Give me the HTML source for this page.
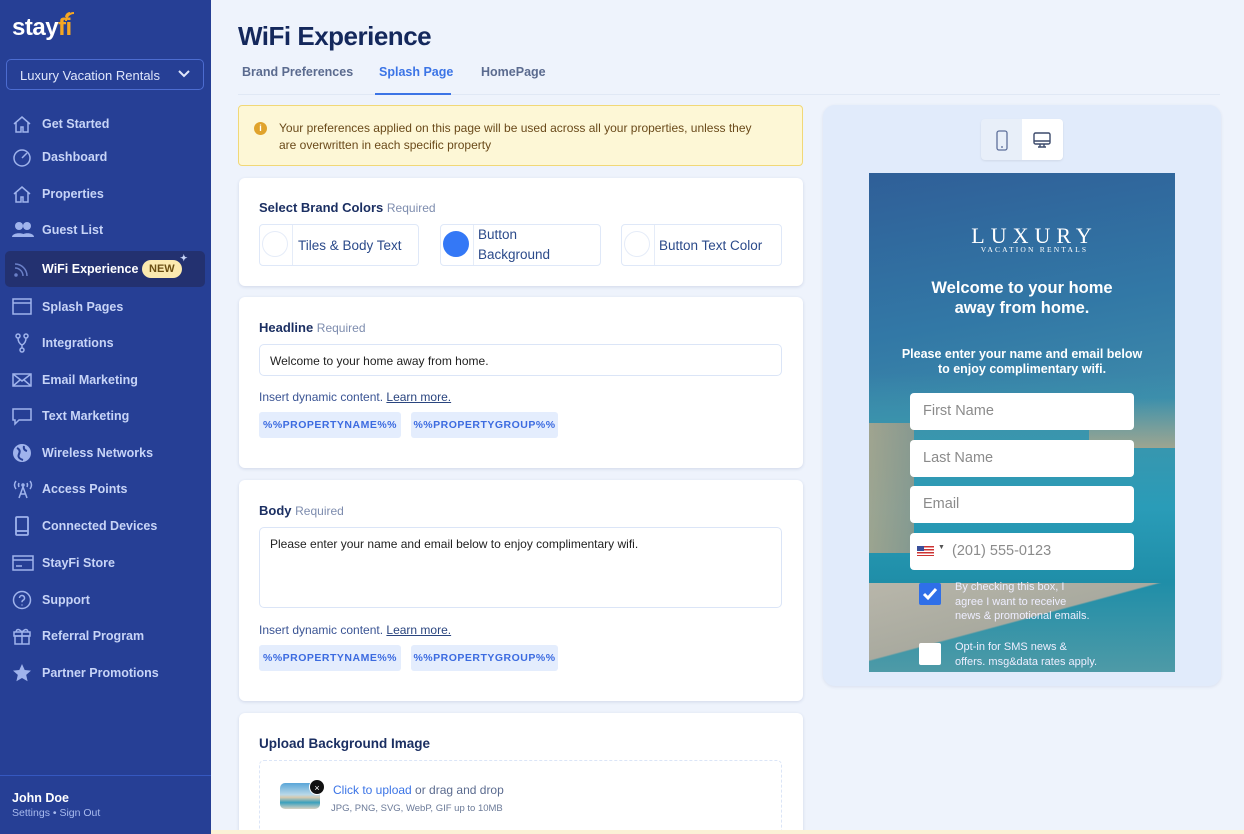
<!DOCTYPE html>
<html><head><meta charset="utf-8"><style>
*{box-sizing:border-box;margin:0;padding:0}
html{width:1244px;height:834px;overflow:hidden}
body{width:1244px;height:834px;overflow:hidden;background:#eef3fc;font-family:"Liberation Sans",sans-serif;position:relative}
.sb{position:absolute;left:0;top:0;width:211px;height:834px;background:#263f95}
.logo{position:absolute;left:12px;top:14px;color:#fff;font-weight:bold;font-size:24px;letter-spacing:-0.5px}
.logo span{color:#f5a623}
.sel{position:absolute;left:6px;top:59px;width:198px;height:31px;border:1px solid #4c6cd0;border-radius:5px;color:#dfe6fb;font-size:13px;padding:8px 0 0 13px}
.sel svg{position:absolute;right:13px;top:10px}
.nav{position:absolute;left:0;width:211px;height:36px;color:#c7d4f7;font-size:12.5px;font-weight:bold}
.nav svg{position:absolute;left:12px;top:8px}
.nav b{position:absolute;left:42px;top:11px;font-weight:bold}
.act{left:5px;width:200px;background:#233170;border-radius:5px;color:#fff}
.act svg{left:7px}.act b{left:37px}
.new{position:absolute;left:137px;top:9px;background:#fbeab0;color:#6b4f12;font-size:11px;font-weight:bold;border-radius:10px;padding:3px 7px}
.user{position:absolute;left:0;top:775px;width:211px;border-top:1px solid #3558c0;height:60px}
h1{position:absolute;left:238px;top:21px;font-size:26px;color:#14285c;font-weight:bold;letter-spacing:-0.5px}
.tab{position:absolute;top:65px;font-size:12.5px;color:#5b6b8f;font-weight:bold}
.card{position:absolute;left:239px;width:564px;background:#fff;border-radius:6px;box-shadow:0 1px 3px rgba(40,60,120,.15);overflow:hidden}
.lbl{position:absolute;left:20px;font-size:13px;font-weight:bold;color:#1b2f62}
.lbl i{font-style:normal;font-weight:normal;color:#7d8cae;font-size:12px}
.inp{position:absolute;left:20px;width:523px;border:1px solid #dbe5f7;border-radius:5px;font-size:12px;color:#222;padding:9px 10px}
.ins{position:absolute;left:20px;font-size:12px;color:#3a5494}
.ins u{color:#2a457f}
.chip{position:absolute;height:26px;background:#e4edfd;border-radius:3px;color:#3c6be0;font-size:10.5px;font-weight:bold;padding:7px 0;letter-spacing:.5px;text-align:center}
.sw{position:absolute;top:46px;height:42px;border:1px solid #dfe8f8;border-radius:4px;font-size:13.5px;color:#2b4a8a}
.sw .c{position:absolute;left:2px;top:6px;width:26px;height:26px;border-radius:50%;border:1px solid #e5ecf8}
.sw .d{position:absolute;left:32px;top:0;width:1px;height:40px;background:#e5ecf8}
.pv{position:absolute;left:823px;top:105px;width:398px;height:581px;background:#e1ebfb;border-radius:12px;box-shadow:0 1px 3px rgba(40,60,120,.1)}
.ph{position:absolute;left:869px;top:173px;width:306px;height:499px;background:linear-gradient(170deg,#2f5f98 0%,#3278a6 30%,#3d8aaa 50%,#4a94a8 60%);overflow:hidden}
.fi{position:absolute;left:41px;width:224px;height:37px;background:#fff;border-radius:4px;color:#8b8b8b;font-size:14.5px;padding:10px 13px}
.wt{position:absolute;color:#fff;text-align:center;width:306px;font-weight:bold}
.cb{position:absolute;left:86px;color:#eef;font-size:11px;line-height:14.5px}
</style></head><body>
<div class="sb">
<div class="logo">stay<span>fi</span><svg width="12" height="12" style="position:absolute;left:52px;top:-3px" viewBox="0 0 12 12"><path d="M2 10a8 8 0 0 1 8-8M2 6a4 4 0 0 1 4-4" stroke="#f5a623" stroke-width="2" fill="none"/></svg></div>
<div class="sel">Luxury Vacation Rentals<svg width="12" height="8" viewBox="0 0 12 8"><path d="M1 1l5 5 5-5" stroke="#dfe6fb" stroke-width="2" fill="none"/></svg></div>
<div class="nav" style="top:106px"><svg width="20" height="20" viewBox="0 0 20 20" fill="none" stroke="#9fb3ec" stroke-width="1.5"><path d="M2 10l8-7 8 7M4 8v10h5v-5h2v5h5V8"/></svg><b>Get Started</b></div>
<div class="nav" style="top:139px"><svg width="20" height="20" viewBox="0 0 20 20" fill="none" stroke="#9fb3ec" stroke-width="1.5"><circle cx="10" cy="11" r="8"/><path d="M10 11l5-5"/></svg><b>Dashboard</b></div>
<div class="nav" style="top:176px"><svg width="20" height="20" viewBox="0 0 20 20" fill="none" stroke="#9fb3ec" stroke-width="1.5"><path d="M2 10l8-7 8 7M4 8v10h5v-5h2v5h5V8"/></svg><b>Properties</b></div>
<div class="nav" style="top:212px"><svg width="22" height="20" viewBox="0 0 22 20" fill="#9fb3ec"><circle cx="7" cy="6" r="4"/><circle cx="15" cy="6" r="4"/><path d="M0 17c0-5 14-5 14 0zM9 17c0-5 13-5 13 0z"/></svg><b>Guest List</b></div>
<div class="nav act" style="top:251px"><svg width="20" height="20" viewBox="0 0 20 20" fill="none" stroke="#6b80c8" stroke-width="1.5"><path d="M3 9a8 8 0 0 1 8 8M3 5a12 12 0 0 1 12 12"/><circle cx="4" cy="16" r="1" fill="#6b80c8"/></svg><b>WiFi Experience</b><span class="new">NEW</span><span style="position:absolute;left:175px;top:2px;color:#c7d4f7;font-size:9px">✦</span></div>
<div class="nav" style="top:289px"><svg width="20" height="20" viewBox="0 0 20 20" fill="none" stroke="#9fb3ec" stroke-width="1.5"><rect x="1" y="2" width="18" height="15"/><path d="M1 6h18"/></svg><b>Splash Pages</b></div>
<div class="nav" style="top:325px"><svg width="20" height="20" viewBox="0 0 20 20" fill="none" stroke="#9fb3ec" stroke-width="1.5"><circle cx="6" cy="3" r="2"/><circle cx="14" cy="3" r="2"/><circle cx="10" cy="17" r="2"/><path d="M6 5q0 5 4 7 4-2 4-7M10 12v3"/></svg><b>Integrations</b></div>
<div class="nav" style="top:362px"><svg width="20" height="20" viewBox="0 0 20 20" fill="none" stroke="#9fb3ec" stroke-width="1.5"><rect x="1" y="4" width="18" height="12"/><path d="M1 4l9 7 9-7M1 16l7-6M19 16l-7-6"/></svg><b>Email Marketing</b></div>
<div class="nav" style="top:398px"><svg width="20" height="20" viewBox="0 0 20 20" fill="none" stroke="#9fb3ec" stroke-width="1.5"><path d="M1 3h18v11H7l-4 4v-4H1z"/></svg><b>Text Marketing</b></div>
<div class="nav" style="top:435px"><svg width="20" height="20" viewBox="0 0 20 20" fill="#9fb3ec"><circle cx="10" cy="10" r="9"/><path d="M5 5q4 2 2 6t4 6M12 3q-1 4 3 5" stroke="#263f95" stroke-width="2" fill="none"/></svg><b>Wireless Networks</b></div>
<div class="nav" style="top:471px"><svg width="22" height="20" viewBox="0 0 22 20" fill="none" stroke="#9fb3ec" stroke-width="1.5"><path d="M4 2q-3 4 0 8M18 2q3 4 0 8M7 4q-1 2 0 4M15 4q1 2 0 4M7 19l4-11 4 11M8 15h6"/><circle cx="11" cy="6" r="1"/></svg><b>Access Points</b></div>
<div class="nav" style="top:508px"><svg width="20" height="20" viewBox="0 0 20 20" fill="none" stroke="#9fb3ec" stroke-width="1.8"><rect x="4" y="1" width="12" height="18" rx="1"/><path d="M4 15h12"/></svg><b>Connected Devices</b></div>
<div class="nav" style="top:545px"><svg width="22" height="20" viewBox="0 0 22 20" fill="none" stroke="#9fb3ec" stroke-width="1.5"><rect x="1" y="3" width="20" height="14"/><path d="M1 7h20M4 13h6"/></svg><b>StayFi Store</b></div>
<div class="nav" style="top:582px"><svg width="20" height="20" viewBox="0 0 20 20" fill="none" stroke="#9fb3ec" stroke-width="1.5"><circle cx="10" cy="10" r="8.5"/><path d="M7.5 8a2.5 2.5 0 1 1 3.5 2.3c-1 .5-1 1-1 2M10 14.5v1"/></svg><b>Support</b></div>
<div class="nav" style="top:618px"><svg width="20" height="20" viewBox="0 0 20 20" fill="none" stroke="#9fb3ec" stroke-width="1.5"><rect x="2" y="6" width="16" height="4"/><rect x="3" y="10" width="14" height="8"/><path d="M10 6v12M10 6q-5-5-6 0M10 6q5-5 6 0"/></svg><b>Referral Program</b></div>
<div class="nav" style="top:655px"><svg width="20" height="20" viewBox="0 0 20 20" fill="#9fb3ec"><path d="M10 1l2.7 6 6.3.6-4.8 4.3 1.4 6.4L10 15l-5.6 3.3 1.4-6.4L1 7.6 7.3 7z"/></svg><b>Partner Promotions</b></div>
<div class="user"><div style="position:absolute;left:12px;top:15px;color:#fff;font-size:12.5px;font-weight:bold">John Doe</div><div style="position:absolute;left:12px;top:31px;color:#a9bbee;font-size:10.5px">Settings • Sign Out</div></div>
</div>

<h1>WiFi Experience</h1>
<div class="tab" style="left:242px">Brand Preferences</div>
<div class="tab" style="left:379px;color:#3b74e6">Splash Page</div>
<div class="tab" style="left:481px">HomePage</div>
<div style="position:absolute;left:238px;top:94px;width:982px;height:1px;background:#e0e8f5"></div>
<div style="position:absolute;left:375px;top:93px;width:76px;height:2px;background:#3b74e6"></div>

<div style="position:absolute;left:238px;top:105px;width:565px;height:61px;background:#fdf7d6;border:1px solid #f1d877;border-radius:4px;color:#6a4a1a;font-size:12px;line-height:17px;padding:14px 10px 0 40px">
<span style="position:absolute;left:15px;top:16px;width:13px;height:13px;border-radius:50%;background:#e0a32c;color:#fff;font-size:9px;text-align:center;line-height:13px;font-weight:bold">i</span>
Your preferences applied on this page will be used across all your properties, unless they<br>are overwritten in each specific property</div>

<div class="card" style="top:178px;height:108px">
<div class="lbl" style="top:22px">Select Brand Colors <i>Required</i></div>
<div class="sw" style="left:20px;width:160px"><div class="c"></div><div class="d"></div><span style="position:absolute;left:38px;top:13px">Tiles &amp; Body Text</span></div>
<div class="sw" style="left:201px;width:161px"><div class="c" style="background:#3478f6;border-color:#3478f6"></div><div class="d"></div><span style="position:absolute;left:37px;top:0;line-height:20px">Button<br>Background</span></div>
<div class="sw" style="left:382px;width:161px"><div class="c"></div><div class="d"></div><span style="position:absolute;left:37px;top:13px">Button Text Color</span></div>
</div>

<div class="card" style="top:297px;height:171px">
<div class="lbl" style="top:23px">Headline <i>Required</i></div>
<div class="inp" style="top:47px;height:32px">Welcome to your home away from home.</div>
<div class="ins" style="top:93px">Insert dynamic content. <u>Learn more.</u></div>
<div class="chip" style="left:20px;top:115px;width:142px">%%PROPERTYNAME%%</div>
<div class="chip" style="left:172px;top:115px;width:147px">%%PROPERTYGROUP%%</div>
</div>

<div class="card" style="top:480px;height:221px">
<div class="lbl" style="top:23px">Body <i>Required</i></div>
<div class="inp" style="top:47px;height:81px">Please enter your name and email below to enjoy complimentary wifi.</div>
<div class="ins" style="top:143px">Insert dynamic content. <u>Learn more.</u></div>
<div class="chip" style="left:20px;top:165px;width:142px">%%PROPERTYNAME%%</div>
<div class="chip" style="left:172px;top:165px;width:147px">%%PROPERTYGROUP%%</div>
</div>

<div class="card" style="top:713px;height:130px">
<div class="lbl" style="top:23px;font-size:13.5px">Upload Background Image</div>
<div style="position:absolute;left:20px;top:47px;width:523px;height:90px;border:1.5px dashed #dbe5f7;border-radius:5px"></div>
<div style="position:absolute;left:41px;top:70px;width:40px;height:26px;border-radius:5px;background:linear-gradient(180deg,#5aa6d8 0%,#b9d8e8 45%,#d8cbb0 55%,#3aa0bd 75%,#d9d2c2 100%)"></div>
<div style="position:absolute;left:70px;top:66px;width:16px;height:16px;border-radius:50%;background:#111;color:#fff;font-size:9px;text-align:center;line-height:16px;border:1px solid #fff">×</div>
<div style="position:absolute;left:94px;top:70px;font-size:12px;color:#5b6b8f"><span style="color:#3b74e6">Click to upload</span> or drag and drop</div>
<div style="position:absolute;left:92px;top:90px;font-size:9.5px;color:#6b7a98">JPG, PNG, SVG, WebP, GIF up to 10MB</div>
</div>
<div style="position:absolute;left:211px;top:830px;width:1033px;height:4px;background:#fbf1d6"></div>

<div class="pv">
<div style="position:absolute;left:158px;top:14px;width:82px;height:41px;background:#e8eff9;border-radius:4px;box-shadow:0 1px 2px rgba(0,0,0,.08)"></div>
<div style="position:absolute;left:199px;top:14px;width:41px;height:41px;background:#fff;border-radius:0 4px 4px 0"></div>
<svg style="position:absolute;left:172px;top:25px" width="14" height="21" viewBox="0 0 14 21" fill="none" stroke="#5d6f9a" stroke-width="1.3"><rect x="2" y="1" width="10" height="19" rx="2"/><path d="M6 17h2"/></svg>
<svg style="position:absolute;left:209px;top:26px" width="20" height="18" viewBox="0 0 20 18" fill="none" stroke="#3c4a6b" stroke-width="1.4"><rect x="2" y="2" width="16" height="11" rx="1.5"/><path d="M2 10h16M8 13v3M12 13v3M6 16h8"/></svg>
</div>
<div class="ph">
<div style="position:absolute;left:0;top:200px;width:306px;height:299px;background:linear-gradient(180deg,rgba(60,140,170,0) 0%,#3a95ad 20%,#2a9cb8 45%,#1f8ea8 70%,#4e9aa7 100%)"></div>
<div style="position:absolute;left:0;top:250px;width:45px;height:130px;background:linear-gradient(90deg,#b9a888,#9b9a88);opacity:.8"></div>
<div style="position:absolute;left:0;top:410px;width:306px;height:89px;background:linear-gradient(165deg,#b8b6aa 0%,#a9aa9f 45%,rgba(0,0,0,0) 46%)"></div>
<div style="position:absolute;left:220px;top:225px;width:86px;height:50px;background:linear-gradient(180deg,rgba(200,185,150,0),#b8a889);opacity:.8"></div>
<div class="wt" style="top:50px;font-weight:normal;font-family:'Liberation Serif',serif;font-size:22px;letter-spacing:6px;padding-left:25px">LUXURY</div>
<div class="wt" style="top:72px;font-weight:normal;font-family:'Liberation Serif',serif;font-size:7.5px;letter-spacing:2.2px;padding-left:25px">VACATION RENTALS</div>
<div class="wt" style="top:105px;font-size:16.5px;line-height:20px">Welcome to your home<br>away from home.</div>
<div class="wt" style="top:174px;font-size:12.5px;line-height:15px">Please enter your name and email below<br>to enjoy complimentary wifi.</div>
<div class="fi" style="top:220px">First Name</div>
<div class="fi" style="top:267px">Last Name</div>
<div class="fi" style="top:313px">Email</div>
<div class="fi" style="top:360px;padding-left:42px"><span style="position:absolute;left:7px;top:13px;width:17px;height:10px;background:repeating-linear-gradient(180deg,#c33 0 1.5px,#fff 1.5px 3px)"><span style="position:absolute;left:0;top:0;width:7px;height:5px;background:#3a4f9a"></span></span><span style="position:absolute;left:28px;top:11px;font-size:7px;color:#555">▼</span>(201) 555-0123</div>
<div style="position:absolute;left:50px;top:410px;width:22px;height:22px;background:#2f6fe8;border-radius:2px"><svg width="22" height="22" viewBox="0 0 22 22"><path d="M5 11l4 4 8-9" stroke="#fff" stroke-width="3" fill="none"/></svg></div>
<div class="cb" style="top:407px">By checking this box, I<br>agree I want to receive<br>news &amp; promotional emails.</div>
<div style="position:absolute;left:50px;top:470px;width:22px;height:22px;background:#fff;border-radius:2px"></div>
<div class="cb" style="top:467px">Opt-in for SMS news &amp;<br>offers. msg&amp;data rates apply.</div>
</div>
</body></html>
